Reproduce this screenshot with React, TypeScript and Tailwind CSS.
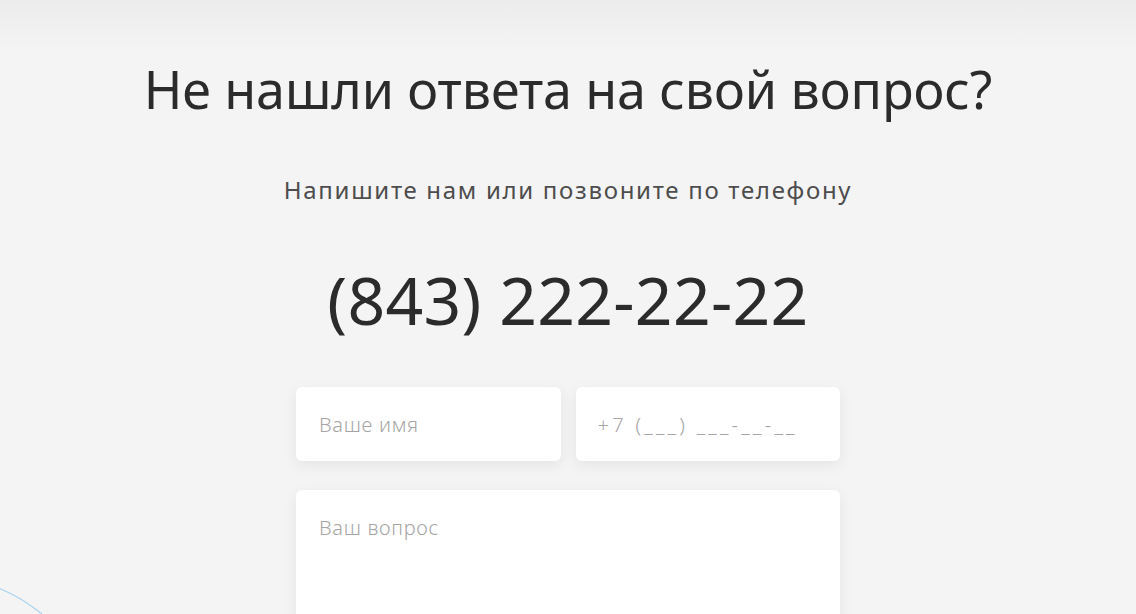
import React from "react";

export default function App() {
  return (
    <div
      className="relative w-full h-[614px] overflow-hidden bg-[#f4f4f4] text-[#2b2b2b]"
      style={{ fontFamily: '"Noto Sans", "Open Sans", sans-serif' }}
    >
      <div className="absolute inset-x-0 top-0 h-[46px] bg-gradient-to-b from-[#ececec] to-[#f3f3f3]" />

      <svg
        className="absolute left-0 bottom-0"
        width="80"
        height="40"
        viewBox="0 0 80 40"
        fill="none"
      >
        <path d="M-20 8 Q 12 16 42 40" stroke="#a9d3ef" strokeWidth="1.2" />
      </svg>

      <div className="relative flex flex-col items-center pt-[53px]">
        <h1 className="text-[52px] leading-[72px] font-normal tracking-[-0.1px]">
          Не нашли ответа на свой вопрос?
        </h1>
        <p className="mt-[49px] text-[24px] leading-[32px] tracking-[1.7px] text-[#4d4d4d]">
          Напишите нам или позвоните по телефону
        </p>
        <div className="mt-[53px] text-[66px] leading-[80px] tracking-[0.3px]">
          (843) 222-22-22
        </div>

        <form className="mt-[48px] w-[544px] flex flex-col gap-[29px]">
          <div className="grid grid-cols-2 gap-[15px]">
            <input
              placeholder="Ваше имя"
              className="h-[74px] rounded-[6px] bg-white px-[23px] text-[20px] font-light tracking-[0.7px] text-[#333] placeholder:text-[#a5a5a5] shadow-[0_4px_14px_rgba(0,0,0,0.07)] outline-none"
            />
            <input
              placeholder="+7 (___) ___-__-__"
              className="h-[74px] rounded-[6px] bg-white px-[22px] text-[20px] font-light tracking-[3.3px] text-[#333] placeholder:text-[#a5a5a5] shadow-[0_4px_14px_rgba(0,0,0,0.07)] outline-none"
            />
          </div>
          <textarea
            placeholder="Ваш вопрос"
            className="h-[160px] resize-none rounded-[6px] bg-white px-[23px] pt-[23px] text-[20px] font-light tracking-[0.7px] text-[#333] placeholder:text-[#a5a5a5] shadow-[0_4px_14px_rgba(0,0,0,0.07)] outline-none"
          />
        </form>
      </div>
    </div>
  );
}
